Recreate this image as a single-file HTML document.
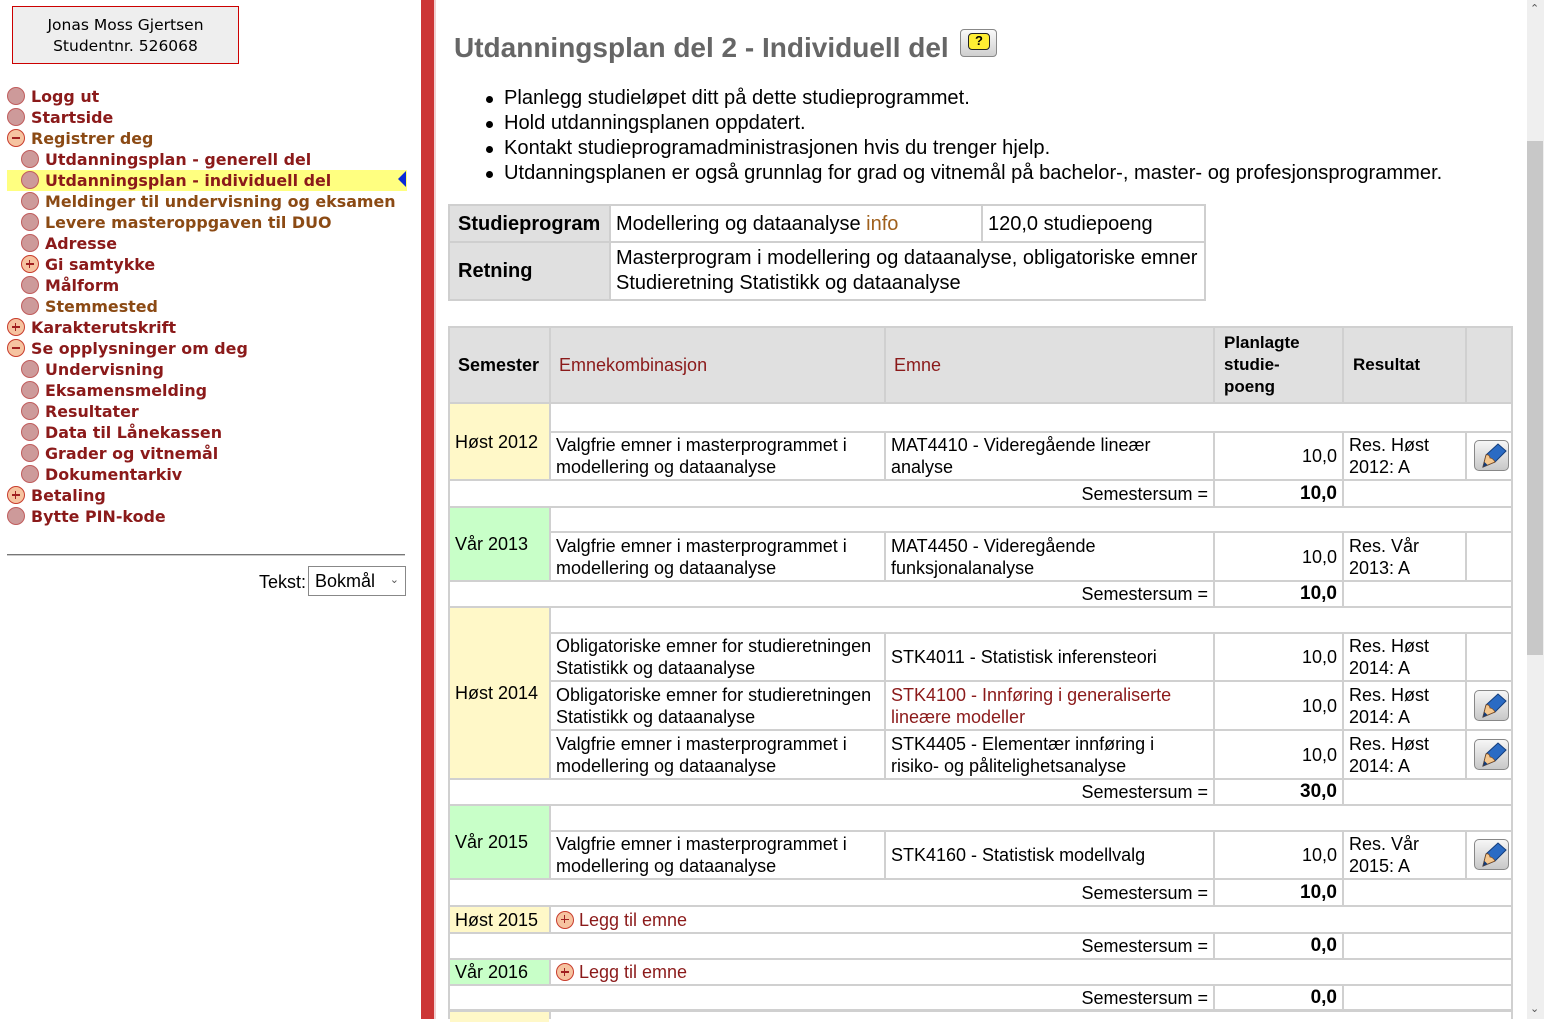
<!DOCTYPE html>
<html><head><meta charset="utf-8">
<style>
*{margin:0;padding:0;box-sizing:border-box}
body{width:1544px;height:1019px;overflow:hidden;background:#fff;font-family:"Liberation Sans",Arial,sans-serif;position:relative;color:#000}
.ub{position:absolute;left:12px;top:6px;width:227px;height:58px;background:#eee;border:1px solid #cc0000;text-align:center;font-family:"DejaVu Sans",Verdana,sans-serif;font-size:15.5px;line-height:21px;padding-top:8px}
.nav{position:absolute;left:7px;top:86px;width:400px;font-family:"DejaVu Sans",Verdana,sans-serif;font-weight:bold;font-size:15.9px;line-height:21px}
.nav div{height:21px;white-space:nowrap;position:relative;padding-left:24px;color:#8b1a1a}
.nav div.s{padding-left:38px}
.nav div.b{color:#8b4a14}
.nav div i{position:absolute;left:0px;top:1px;width:18px;height:18px;border-radius:50%;background:#cd9a9a;border:1.5px solid #c05c5c}
.nav div.s i{left:14px}
.nav div i.p,.nav div i.m{background:#f6c3a0;border-color:#c83c2c}
.nav div i.p:before,.nav div i.m:before{content:"";position:absolute;left:3.5px;top:7px;width:8px;height:1.5px;background:#a02020}
.nav div i.p:after{content:"";position:absolute;left:6.75px;top:3.75px;width:1.5px;height:8px;background:#a02020}
.nav div.h{background:#ffff80}
.tri{position:absolute;left:398px;top:171px;width:0;height:0;border-top:8px solid transparent;border-bottom:8px solid transparent;border-right:8px solid #0a2ad8}
.hr{position:absolute;left:7px;top:554px;width:398px;height:2px;background:#777;border-bottom:1px solid #ccc}
.tk{position:absolute;left:259px;top:572px;font-size:18px}
.sel{position:absolute;left:308px;top:566px;width:98px;height:30px;border:1px solid #888;font-size:18px;padding:4px 0 0 6px}
.sel span{position:absolute;right:6px;top:6px;font-size:11px;color:#555}
.bar{position:absolute;left:421px;top:0;width:13px;height:1019px;background:#cc3535}
.bar2{position:absolute;left:434px;top:0;width:2px;height:1019px;background:#f0d0d0}
h1{position:absolute;left:454px;top:32px;font-size:28px;color:#666;font-weight:bold;white-space:nowrap}
.help{position:absolute;left:960px;top:29px;width:37px;height:28px;border:1px solid #888;border-radius:4px;background:linear-gradient(#fafafa,#cfcfcf)}
.help b{position:absolute;left:7px;top:3px;width:22px;height:17px;background:#ffee33;border:1.5px solid #222;border-radius:4px;font-size:13px;text-align:center;line-height:14px}
ul{position:absolute;left:504px;top:86px;font-size:20.1px;line-height:25px;list-style:none;white-space:nowrap}
ul li:before{content:"";position:absolute;left:-18px;margin-top:10px;width:7px;height:7px;border-radius:50%;background:#000}
.c{position:absolute;background:#fff;display:flex;align-items:center;padding:0 5px;font-size:18px;line-height:22px}
.g{background:#e0e0e0}
.y{background:#fff8c8}
.gr{background:#c8ffc8}
.r{justify-content:flex-end}
.bd{font-weight:bold}
.lk{color:#8b1a1a}
.in{color:#a0601c}
.pen{position:absolute;width:35px;height:31px;border:1px solid #888;border-radius:5px;background:linear-gradient(#f6f6f6,#c8c8c8)}
.add{display:inline-block;width:18px;height:18px;border-radius:50%;background:#f6c3a0;border:1.5px solid #c83c2c;position:relative;margin-right:5px;vertical-align:-3px}
.add:before{content:"";position:absolute;left:3.5px;top:7px;width:8px;height:1.5px;background:#a02020}
.add:after{content:"";position:absolute;left:6.75px;top:3.75px;width:1.5px;height:8px;background:#a02020}
.sb{position:absolute;left:1527px;top:0;width:17px;height:1019px;background:#efefef}
.th{position:absolute;left:1527px;top:141px;width:16px;height:514px;background:#c8c8c8}
</style></head><body>
<div class="ub">Jonas Moss Gjertsen<br>Studentnr. 526068</div>
<div class="nav">
<div><i></i>Logg ut</div>
<div><i></i>Startside</div>
<div class="b"><i class="m"></i>Registrer deg</div>
<div class="s"><i></i>Utdanningsplan - generell del</div>
<div class="s h"><i></i>Utdanningsplan - individuell del</div>
<div class="s b"><i></i>Meldinger til undervisning og eksamen</div>
<div class="s b"><i></i>Levere masteroppgaven til DUO</div>
<div class="s"><i></i>Adresse</div>
<div class="s"><i class="p"></i>Gi samtykke</div>
<div class="s"><i></i>Målform</div>
<div class="s b"><i></i>Stemmested</div>
<div><i class="p"></i>Karakterutskrift</div>
<div><i class="m"></i>Se opplysninger om deg</div>
<div class="s"><i></i>Undervisning</div>
<div class="s"><i></i>Eksamensmelding</div>
<div class="s"><i></i>Resultater</div>
<div class="s"><i></i>Data til Lånekassen</div>
<div class="s"><i></i>Grader og vitnemål</div>
<div class="s"><i></i>Dokumentarkiv</div>
<div><i class="p"></i>Betaling</div>
<div><i></i>Bytte PIN-kode</div>
</div>
<div class="tri"></div>
<div class="hr"></div>
<div class="tk">Tekst:</div>
<div class="sel">Bokmål<span>&#8964;</span></div>
<div class="bar"></div><div class="bar2"></div>

<h1>Utdanningsplan del 2 - Individuell del</h1>
<div class="help"><b>?</b></div>
<ul>
<li>Planlegg studieløpet ditt på dette studieprogrammet.</li>
<li>Hold utdanningsplanen oppdatert.</li>
<li>Kontakt studieprogramadministrasjonen hvis du trenger hjelp.</li>
<li>Utdanningsplanen er også grunnlag for grad og vitnemål på bachelor-, master- og profesjonsprogrammer.</li>
</ul>

<div style="position:absolute;left:448px;top:204px;width:758px;height:97px;background:#cfcfcf"></div>
<div class="c g bd" style="left:450px;top:206px;width:159px;height:35px;font-size:20px;padding-left:8px">Studieprogram</div>
<div class="c" style="left:611px;top:206px;width:370px;height:35px;font-size:20px">Modellering og dataanalyse&nbsp;<span class="in">info</span></div>
<div class="c" style="left:983px;top:206px;width:221px;height:35px;font-size:20px">120,0 studiepoeng</div>
<div class="c g bd" style="left:450px;top:243px;width:159px;height:56px;font-size:20px;padding-left:8px">Retning</div>
<div class="c" style="left:611px;top:243px;width:593px;height:56px;font-size:20px;line-height:25px">Masterprogram i modellering og dataanalyse, obligatoriske emner<br>Studieretning Statistikk og dataanalyse</div>

<div style="position:absolute;left:448px;top:326px;width:1065px;height:693px;background:#d0d0d0"></div>
<div class="c g bd" style="left:450px;top:328px;width:99px;height:74px;padding-left:8px">Semester</div>
<div class="c g lk" style="left:551px;top:328px;width:333px;height:74px;padding-left:8px">Emnekombinasjon</div>
<div class="c g lk" style="left:886px;top:328px;width:327px;height:74px;padding-left:8px">Emne</div>
<div class="c g bd" style="left:1215px;top:328px;width:127px;height:74px;padding-left:9px;font-size:17px">Planlagte<br>studie-<br>poeng</div>
<div class="c g bd" style="left:1344px;top:328px;width:121px;height:74px;padding-left:9px;font-size:17px">Resultat</div>
<div class="c g" style="left:1467px;top:328px;width:44px;height:74px"></div>

<div class="c y" style="left:450px;top:404px;width:99px;height:75px">Høst 2012</div>
<div class="c" style="left:551px;top:404px;width:960px;height:27px"></div>
<div class="c" style="left:551px;top:433px;width:333px;height:46px">Valgfrie emner i masterprogrammet i<br>modellering og dataanalyse</div>
<div class="c" style="left:886px;top:433px;width:327px;height:46px">MAT4410 - Videregående lineær<br>analyse</div>
<div class="c r" style="left:1215px;top:433px;width:127px;height:46px">10,0</div>
<div class="c" style="left:1344px;top:433px;width:121px;height:46px">Res. Høst<br>2012: A</div>
<div class="c" style="left:1467px;top:433px;width:44px;height:46px"></div>
<div class="c r" style="left:450px;top:481px;width:763px;height:25px">Semestersum =</div>
<div class="c r bd" style="left:1215px;top:481px;width:127px;height:25px;font-size:19px">10,0</div>
<div class="c" style="left:1344px;top:481px;width:167px;height:25px"></div>

<div class="c gr" style="left:450px;top:508px;width:99px;height:72px">Vår 2013</div>
<div class="c" style="left:551px;top:508px;width:960px;height:23px"></div>
<div class="c" style="left:551px;top:533px;width:333px;height:47px">Valgfrie emner i masterprogrammet i<br>modellering og dataanalyse</div>
<div class="c" style="left:886px;top:533px;width:327px;height:47px">MAT4450 - Videregående<br>funksjonalanalyse</div>
<div class="c r" style="left:1215px;top:533px;width:127px;height:47px">10,0</div>
<div class="c" style="left:1344px;top:533px;width:121px;height:47px">Res. Vår<br>2013: A</div>
<div class="c" style="left:1467px;top:533px;width:44px;height:47px"></div>
<div class="c r" style="left:450px;top:582px;width:763px;height:24px">Semestersum =</div>
<div class="c r bd" style="left:1215px;top:582px;width:127px;height:24px;font-size:19px">10,0</div>
<div class="c" style="left:1344px;top:582px;width:167px;height:24px"></div>

<div class="c y" style="left:450px;top:608px;width:99px;height:170px">Høst 2014</div>
<div class="c" style="left:551px;top:608px;width:960px;height:24px"></div>
<div class="c" style="left:551px;top:634px;width:333px;height:46px">Obligatoriske emner for studieretningen<br>Statistikk og dataanalyse</div>
<div class="c" style="left:886px;top:634px;width:327px;height:46px">STK4011 - Statistisk inferensteori</div>
<div class="c r" style="left:1215px;top:634px;width:127px;height:46px">10,0</div>
<div class="c" style="left:1344px;top:634px;width:121px;height:46px">Res. Høst<br>2014: A</div>
<div class="c" style="left:1467px;top:634px;width:44px;height:46px"></div>
<div class="c" style="left:551px;top:682px;width:333px;height:47px">Obligatoriske emner for studieretningen<br>Statistikk og dataanalyse</div>
<div class="c lk" style="left:886px;top:682px;width:327px;height:47px">STK4100 - Innføring i generaliserte<br>lineære modeller</div>
<div class="c r" style="left:1215px;top:682px;width:127px;height:47px">10,0</div>
<div class="c" style="left:1344px;top:682px;width:121px;height:47px">Res. Høst<br>2014: A</div>
<div class="c" style="left:1467px;top:682px;width:44px;height:47px"></div>
<div class="c" style="left:551px;top:731px;width:333px;height:47px">Valgfrie emner i masterprogrammet i<br>modellering og dataanalyse</div>
<div class="c" style="left:886px;top:731px;width:327px;height:47px">STK4405 - Elementær innføring i<br>risiko- og pålitelighetsanalyse</div>
<div class="c r" style="left:1215px;top:731px;width:127px;height:47px">10,0</div>
<div class="c" style="left:1344px;top:731px;width:121px;height:47px">Res. Høst<br>2014: A</div>
<div class="c" style="left:1467px;top:731px;width:44px;height:47px"></div>
<div class="c r" style="left:450px;top:780px;width:763px;height:24px">Semestersum =</div>
<div class="c r bd" style="left:1215px;top:780px;width:127px;height:24px;font-size:19px">30,0</div>
<div class="c" style="left:1344px;top:780px;width:167px;height:24px"></div>

<div class="c gr" style="left:450px;top:806px;width:99px;height:72px">Vår 2015</div>
<div class="c" style="left:551px;top:806px;width:960px;height:24px"></div>
<div class="c" style="left:551px;top:832px;width:333px;height:46px">Valgfrie emner i masterprogrammet i<br>modellering og dataanalyse</div>
<div class="c" style="left:886px;top:832px;width:327px;height:46px">STK4160 - Statistisk modellvalg</div>
<div class="c r" style="left:1215px;top:832px;width:127px;height:46px">10,0</div>
<div class="c" style="left:1344px;top:832px;width:121px;height:46px">Res. Vår<br>2015: A</div>
<div class="c" style="left:1467px;top:832px;width:44px;height:46px"></div>
<div class="c r" style="left:450px;top:880px;width:763px;height:25px">Semestersum =</div>
<div class="c r bd" style="left:1215px;top:880px;width:127px;height:25px;font-size:19px">10,0</div>
<div class="c" style="left:1344px;top:880px;width:167px;height:25px"></div>

<div class="c y" style="left:450px;top:907px;width:99px;height:25px">Høst 2015</div>
<div class="c lk" style="left:551px;top:907px;width:960px;height:25px"><span class="add"></span>Legg til emne</div>
<div class="c r" style="left:450px;top:934px;width:763px;height:24px">Semestersum =</div>
<div class="c r bd" style="left:1215px;top:934px;width:127px;height:24px;font-size:19px">0,0</div>
<div class="c" style="left:1344px;top:934px;width:167px;height:24px"></div>

<div class="c gr" style="left:450px;top:960px;width:99px;height:24px">Vår 2016</div>
<div class="c lk" style="left:551px;top:960px;width:960px;height:24px"><span class="add"></span>Legg til emne</div>
<div class="c r" style="left:450px;top:986px;width:763px;height:23px">Semestersum =</div>
<div class="c r bd" style="left:1215px;top:986px;width:127px;height:23px;font-size:19px">0,0</div>
<div class="c" style="left:1344px;top:986px;width:167px;height:23px"></div>
<div class="c y" style="left:450px;top:1012px;width:99px;height:10px"></div>
<div class="c" style="left:551px;top:1012px;width:960px;height:10px"></div>

<svg width="0" height="0" style="position:absolute"><defs><g id="pc"><path d="M8 26 L11 14 L23 3 L31 10 L20 21 Z" fill="#2a6bc4" stroke="#123c7a" stroke-width="1"/><path d="M8 26 L11 14 C13 13 15 15 15 17 C17 17 19 19 20 21 Z" fill="#f4c890" stroke="#7a4a20" stroke-width="0.8"/><path d="M8 26 L9.5 21 L12.5 24 Z" fill="#123c7a"/></g></defs></svg>
<div class="pen" style="left:1474px;top:440px"><svg width="35" height="31"><use href="#pc"/></svg></div>
<div class="pen" style="left:1474px;top:690px"><svg width="35" height="31"><use href="#pc"/></svg></div>
<div class="pen" style="left:1474px;top:739px"><svg width="35" height="31"><use href="#pc"/></svg></div>
<div class="pen" style="left:1474px;top:839px"><svg width="35" height="31"><use href="#pc"/></svg></div>

<div class="sb"></div><div class="th"></div>
<div style="position:absolute;left:1530px;top:2px;font-size:11px;color:#555">&#8963;</div>
<div style="position:absolute;left:1530px;top:1002px;font-size:11px;color:#555">&#8964;</div>
</body></html>
